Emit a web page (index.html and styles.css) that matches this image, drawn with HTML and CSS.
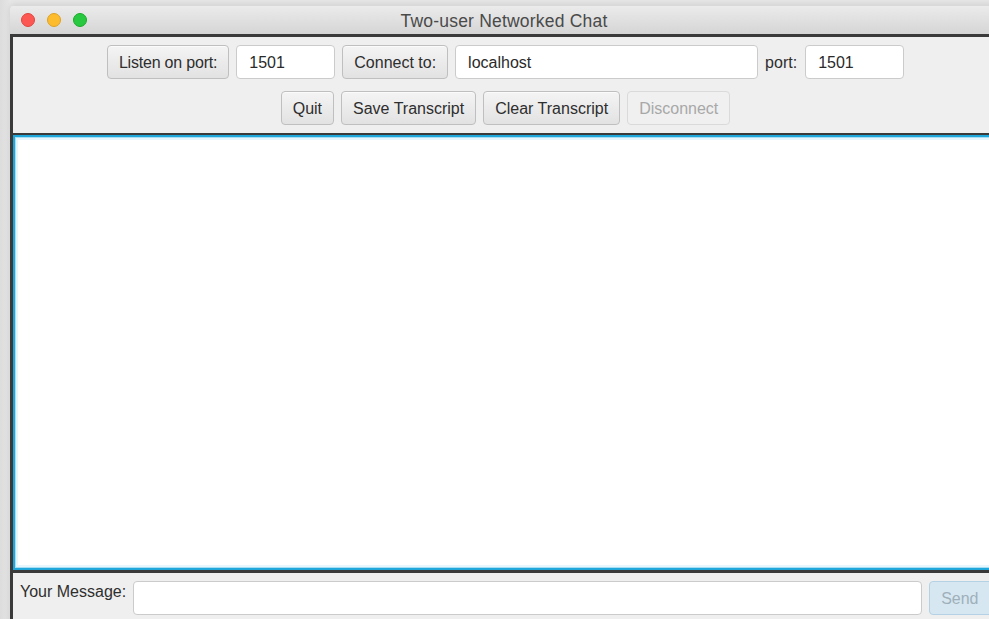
FILE: index.html
```html
<!DOCTYPE html>
<html>
<head>
<meta charset="utf-8">
<title>Two-user Networked Chat</title>
<link rel="stylesheet" href="styles.css">
</head>
<body>
<div class="window">
  <div class="titlebar">
    <div class="lights">
      <span class="light red"></span>
      <span class="light yellow"></span>
      <span class="light green"></span>
    </div>
    <div class="title">Two-user Networked Chat</div>
  </div>
  <div class="frame">
    <div class="toolbar">
      <div class="row">
        <button class="btn tight">Listen on port:</button>
        <input class="field port" type="text" value="1501">
        <button class="btn">Connect to:</button>
        <input class="field host" type="text" value="localhost">
        <span class="label">port:</span>
        <input class="field port" type="text" value="1501">
      </div>
      <div class="row">
        <button class="btn">Quit</button>
        <button class="btn">Save Transcript</button>
        <button class="btn">Clear Transcript</button>
        <button class="btn" disabled>Disconnect</button>
      </div>
    </div>
    <div class="transcript"></div>
    <div class="composer">
      <span class="label msg-label">Your Message:</span>
      <input class="field message" type="text">
      <button class="btn send" disabled>Send</button>
    </div>
  </div>
</div>
</body>
</html>
```

FILE: styles.css
```css
html, body {
  margin: 0;
  height: 619px;
  overflow: hidden;
}

body {
  background: linear-gradient(to right, #dcdcdc 0, #e6e6e6 10px);
  padding: 5px 0 0 10px;
  box-sizing: border-box;
  font-family: "Liberation Sans", Arial, sans-serif;
  color: #2e2e2e;
}

.window {
  width: 988px;
  height: 620px;
  display: flex;
  flex-direction: column;
  border-radius: 5px 5px 0 0;
  overflow: hidden;
  box-shadow: 0 0 6px rgba(0, 0, 0, 0.12);
}

.titlebar {
  height: 29px;
  flex: none;
  position: relative;
  background: linear-gradient(to bottom, #ebebeb, #d5d5d5);
  border-top: 1px solid #d9d9d9;
  box-sizing: border-box;
  display: flex;
  align-items: center;
  justify-content: center;
}

.lights {
  position: absolute;
  left: 11px;
  top: 7px;
  display: flex;
  gap: 12px;
}

.light {
  width: 14px;
  height: 14px;
  border-radius: 50%;
  box-sizing: border-box;
}
.red { background: #fc5753; border: 1px solid #e0443e; }
.yellow { background: #fdbc2e; border: 1px solid #dea123; }
.green { background: #28c840; border: 1px solid #1aab29; }

.title {
  font-size: 17.5px;
  color: #4a4a4a;
  padding-top: 2px;
  letter-spacing: 0.2px;
}

.frame {
  flex: 1;
  display: flex;
  flex-direction: column;
  border-top: 3px solid #3a3a3a;
  border-left: 3px solid #3a3a3a;
  background: #efefef;
}

.toolbar {
  flex: none;
  display: flex;
  flex-direction: column;
  align-items: center;
  gap: 12px;
  padding: 8px 0 8px;
  border-bottom: 2px solid #3a3a3a;
}

.row {
  display: flex;
  align-items: center;
  gap: 7px;
}

.btn {
  height: 34px;
  box-sizing: border-box;
  padding: 2px 11px 0;
  font-family: inherit;
  font-size: 16px;
  color: #2e2e2e;
  background: linear-gradient(to bottom, #f4f4f4, #e2e2e2);
  border: 1px solid #bfbfbf;
  border-radius: 4px;
  box-shadow: inset 0 1px 0 #fbfbfb;
}

.btn.tight {
  letter-spacing: -0.2px;
}

.btn:disabled {
  color: #a8a8a8;
  background: #f0f0f0;
  border-color: #dadada;
  box-shadow: none;
}

.field {
  height: 34px;
  box-sizing: border-box;
  padding: 2px 11px 0 12px;
  font-family: inherit;
  font-size: 16px;
  color: #2a2a2a;
  background: #fff;
  border: 1px solid #cbcbcb;
  border-radius: 4px;
  outline: none;
}

.field.port { width: 99px; }
.field.host { width: 303px; }

.label {
  font-size: 16px;
  color: #2e2e2e;
  margin: 2px 1px 0 0;
  white-space: nowrap;
  flex: none;
}

.transcript {
  height: 435px;
  flex: none;
  box-sizing: border-box;
  background: #fff;
  border: 2px solid #1fa6db;
  border-right: none;
  box-shadow: inset 0 0 0 1px #a9def2, inset 0 0 0 3px #e6f6fc;
}

.composer {
  flex: 1;
  display: flex;
  align-items: flex-start;
  gap: 7px;
  padding: 8px 0 0 7px;
  border-top: 3px solid #3a3a3a;
}

.msg-label {
  padding-top: 2px;
  margin: 0;
}

.field.message { width: 789px; flex: none; }

.btn.send {
  flex: none;
  width: 70px;
  text-align: left;
  padding-left: 11px;
  color: #9fb0ba;
  background: #d6e7f1;
  border-color: #b4d2e3;
}
```
